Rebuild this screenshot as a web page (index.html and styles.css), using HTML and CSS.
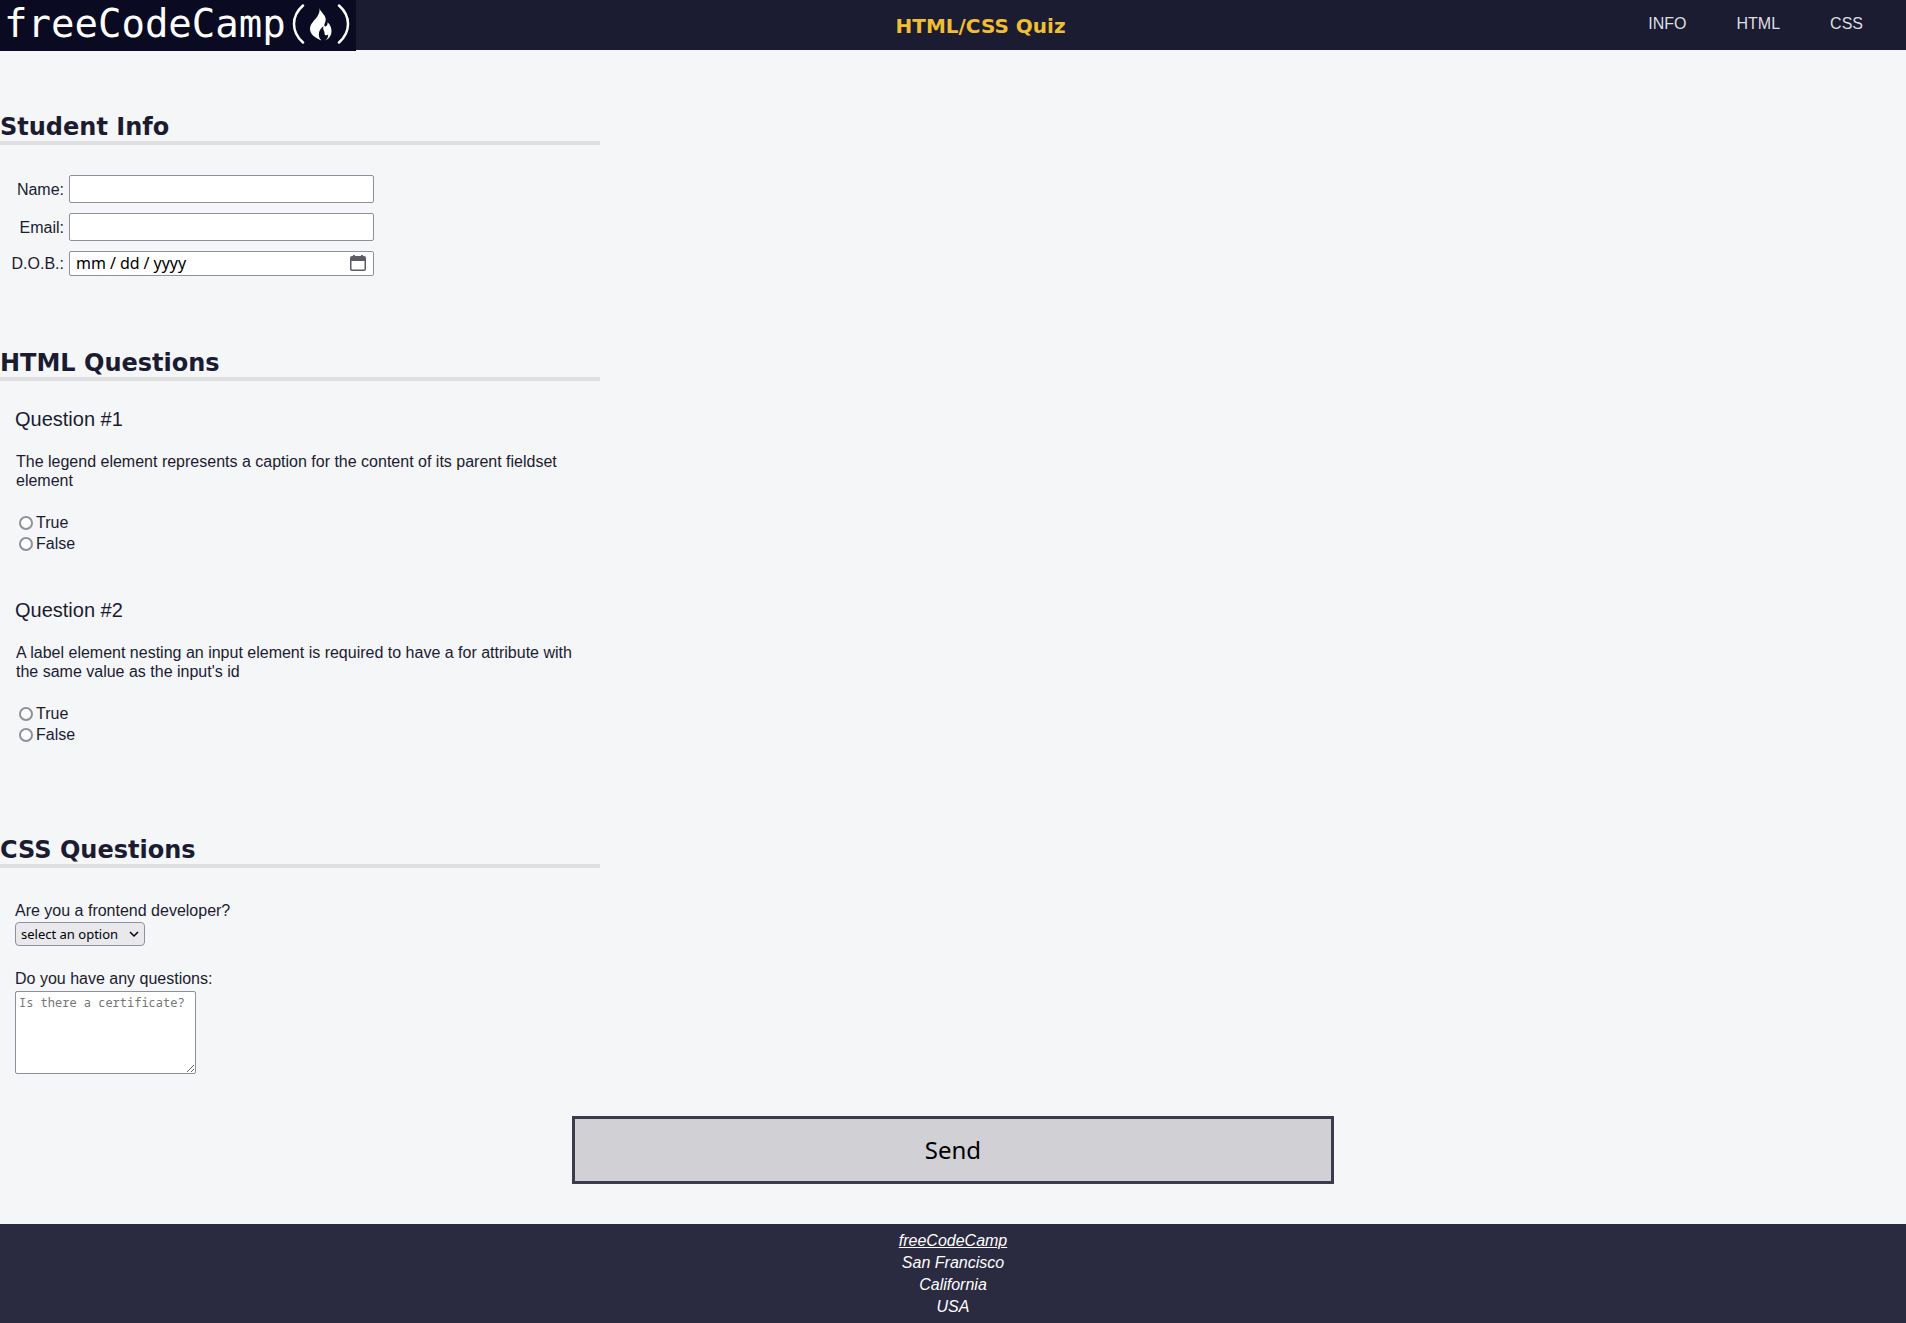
FILE: index.html
```html
<!DOCTYPE html>
<html lang="en">
<head>
  <meta charset="UTF-8">
  <meta name="viewport" content="width=device-width, initial-scale=1.0">
  <title>HTML/CSS Quiz</title>
  <link rel="stylesheet" href="styles.css">
</head>
<body>
  <header class="header">
    <div class="logo">
      <span class="logo-text">freeCodeCamp</span>
      <svg class="logo-mark" viewBox="0 0 60 40" aria-hidden="true">
        <path d="M13 1.500C1 12 1 28 13 38.500" fill="none" stroke="#fff" stroke-width="2.500" stroke-linecap="round"/>
        <path d="M49 1.500C61 12 61 28 49 38.500" fill="none" stroke="#fff" stroke-width="2.500" stroke-linecap="round"/>
        <path d="M29.500 4c1 4 5 6 6 10 1 4-2 6-1 8 1 1 2.500 0 3-2 0-1 0-2-1-2 3 1 5 5 5 9 0 5-3 8-6 9.500 2-2 3-4 2.500-6-1 1-2 1-3 .5-1-1 0-3-1-4-1-2-1-3-.5-5-2 2-4 4-4.500 6.500-.5 3 0 6 2.500 8C25 34 20 30 20 25c0-5 4-8 7-12 2-3 3-6 2.500-9z" fill="#fff"/>
      </svg>
    </div>
    <h1 class="title">HTML/CSS Quiz</h1>
    <nav>
      <ul class="nav-list">
        <li><a href="#student-info">INFO</a></li>
        <li><a href="#html-questions">HTML</a></li>
        <li><a href="#css-questions">CSS</a></li>
      </ul>
    </nav>
  </header>
  <main>
    <form>
      <section class="section">
        <h2 id="student-info">Student Info</h2>
        <div class="info">
          <label for="student-name">Name:</label>
          <input type="text" id="student-name" class="field">
          <label for="student-email">Email:</label>
          <input type="email" id="student-email" class="field">
          <label for="birth-date">D.O.B.:</label>
          <input type="date" id="birth-date" class="field field-date">
        </div>
      </section>
      <section class="section">
        <h2 id="html-questions">HTML Questions</h2>
        <div class="questions">
          <div class="question">
            <h3>Question #1</h3>
            <fieldset>
              <legend>The legend element represents a caption for the content of its parent fieldset element</legend>
              <label class="option"><input type="radio" name="q1" value="true">True</label>
              <label class="option"><input type="radio" name="q1" value="false">False</label>
            </fieldset>
          </div>
          <div class="question">
            <h3>Question #2</h3>
            <fieldset>
              <legend>A label element nesting an input element is required to have a for attribute with the same value as the input's id</legend>
              <label class="option"><input type="radio" name="q2" value="true">True</label>
              <label class="option"><input type="radio" name="q2" value="false">False</label>
            </fieldset>
          </div>
        </div>
      </section>
      <section class="section">
        <h2 id="css-questions">CSS Questions</h2>
        <div class="form-group">
          <label for="developer">Are you a frontend developer?</label>
          <select id="developer">
            <option>select an option</option>
            <option>Yes</option>
            <option>No</option>
          </select>
          <label for="questions">Do you have any questions:</label>
          <textarea id="questions" placeholder="Is there a certificate?"></textarea>
        </div>
      </section>
      <button type="submit" class="send">Send</button>
    </form>
  </main>
  <footer class="footer">
    <address>
      <a href="#">freeCodeCamp</a><br>
      San Francisco<br>
      California<br>
      USA
    </address>
  </footer>
</body>
</html>
```
FILE: styles.css
```css
* {
  box-sizing: border-box;
}

body {
  margin: 0;
  background: #f5f6f7;
  color: #1b1b32;
  font: 16px/19px "Liberation Sans", Helvetica, sans-serif;
}

.header {
  display: flex;
  justify-content: space-between;
  align-items: flex-start;
  height: 50px;
  background: #1b1b32;
}

.logo {
  display: flex;
  align-items: center;
  height: 51px;
  padding: 0 6px 4px 4px;
  background: #0a0a23;
  color: #fff;
}

.logo-text {
  font: 39px/47px "DejaVu Sans Mono", monospace;
}

.logo-mark {
  width: 60px;
  height: 40px;
  margin-left: 4px;
}

.title {
  margin: 0;
  color: #f1be32;
  font: bold 20px/52px "DejaVu Sans", Verdana, sans-serif;
}

.nav-list {
  display: flex;
  gap: 50px;
  margin: 0;
  padding: 14px 43px 0;
  list-style: none;
}

.nav-list a {
  color: #dfdfe2;
  text-decoration: none;
}

.section {
  max-width: 600px;
  padding-top: 62px;
}

h2 {
  margin: 0;
  padding-top: 1px;
  border-bottom: 4px solid #dfdfe2;
  font: bold 24px/28px "DejaVu Sans", Verdana, sans-serif;
}

.info {
  display: grid;
  grid-template-columns: 64px 305px;
  align-items: center;
  gap: 10px 5px;
  padding: 30px 0 10px;
}

.info label {
  text-align: right;
}

.field {
  width: 100%;
  height: 28px;
  padding: 1px 5px;
  border: 1px solid #8f8f9d;
  border-radius: 2px;
  background: #fff;
  color: #000;
  font: 16px/20px "Noto Sans", sans-serif;
}

.field-date {
  height: 25px;
  padding: 0 7px 2px 5px;
}

.field-date::-webkit-datetime-edit-text {
  padding: 0 3px;
}

.field-date::-webkit-calendar-picker-indicator {
  width: 16px;
  height: 16px;
  padding: 0;
  background: url("data:image/svg+xml,%3Csvg xmlns='http://www.w3.org/2000/svg' viewBox='0 0 16 16'%3E%3Cpath fill='%235b5b66' fill-rule='evenodd' d='M3 0h2v1h6V0h2v1h1a2 2 0 0 1 2 2v11a2 2 0 0 1-2 2H2a2 2 0 0 1-2-2V3a2 2 0 0 1 2-2h1zM1.500 6v8l.5.5h12l.5-.5V6z'/%3E%3C/svg%3E") center / 16px 16px no-repeat;
}

.questions {
  padding-bottom: 10px;
}

.question {
  padding: 26px 15px 18px;
}

h3 {
  margin: 0;
  font-size: 20px;
  font-weight: 400;
  line-height: 24px;
}

fieldset {
  min-width: 0;
  margin: 0;
  padding: 0 1px;
  border: 0;
}

legend {
  padding: 21px 0 22px;
}

.option {
  display: flex;
  align-items: center;
  gap: 3px;
  height: 21px;
}

.option input {
  appearance: none;
  width: 14px;
  height: 14px;
  margin: 0 0 0 3px;
  border: 2px solid #8f8f9d;
  border-radius: 50%;
  background: #fff;
}

.option input:checked {
  border-width: 4px;
}

.form-group {
  display: flex;
  flex-direction: column;
  align-items: flex-start;
  padding: 33px 15px 0;
}

select {
  width: 130px;
  height: 24px;
  margin: 2px 0 23px;
  padding: 0 5px;
  border: 1px solid #8f8f9d;
  border-radius: 4px;
  appearance: none;
  background: #e9e9ed url("data:image/svg+xml,%3Csvg xmlns='http://www.w3.org/2000/svg' viewBox='0 0 10 10'%3E%3Cpath fill='none' stroke='%23000' stroke-width='1.500' d='M1 3l4 4 4-4'/%3E%3C/svg%3E") right 5px center / 10px 10px no-repeat;
  color: #000;
  font: 13px/20px "Noto Sans", sans-serif;
}

textarea {
  width: 181px;
  height: 83px;
  margin-top: 3px;
  padding: 2px 3px;
  border: 1px solid #8f8f9d;
  border-radius: 2px;
  font: 12px/17px "Noto Sans Mono", "DejaVu Sans Mono", monospace;
}

.send {
  display: block;
  width: 40%;
  margin: 42px auto 40px;
  padding: 14px;
  border: 3px solid #3b3b4f;
  background: #d0d0d5;
  color: #000;
  font: 24px/34px "Noto Sans", sans-serif;
}

.footer {
  padding: 6px 0;
  background: #2a2a40;
  color: #fff;
  line-height: 22px;
  text-align: center;
}

.footer a {
  color: #fff;
}
```
